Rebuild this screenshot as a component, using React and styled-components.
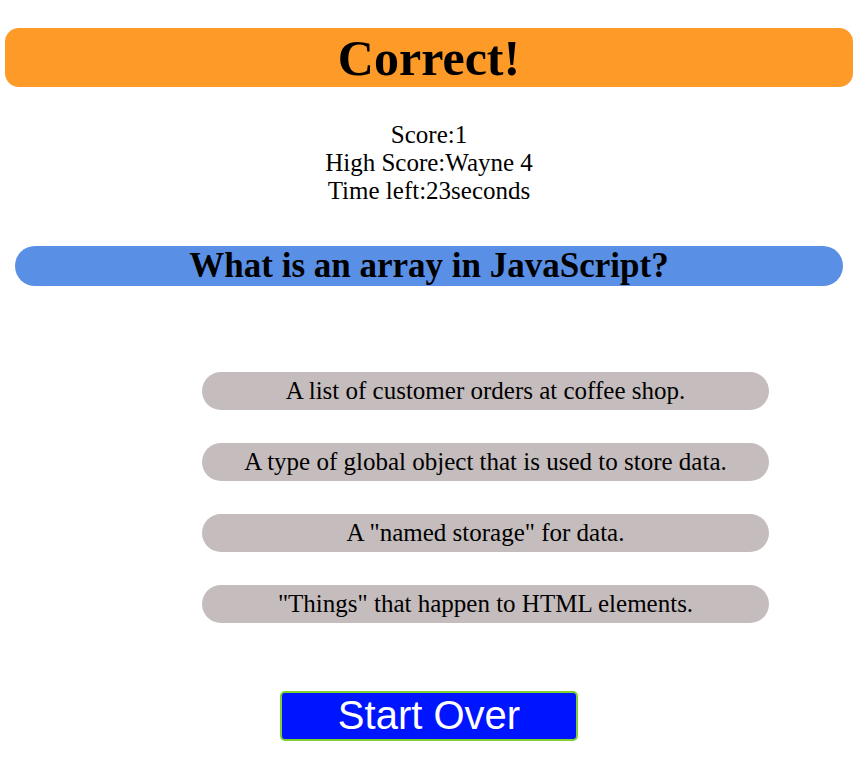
import styled, { createGlobalStyle } from 'styled-components'

const GlobalStyle = createGlobalStyle`
  body {
    margin: 0;
    background: #ffffff;
    font-family: "Liberation Serif", "Times New Roman", serif;
  }
`

const Page = styled.main`
  padding: 28px 6px 0 5px;
  display: flex;
  flex-direction: column;
`

const Banner = styled.header`
  height: 59px;
  background-color: #fe9a27;
  border-radius: 14px;
  display: flex;
  align-items: center;
  justify-content: center;
  & h1 {
    margin: 0;
    font-size: 50px;
    font-weight: bold;
    line-height: 1;
  }
`

const Stats = styled.section`
  margin-top: 34px;
  text-align: center;
  font-size: 25px;
  line-height: 28px;
`

const Question = styled.h2`
  margin: 41px 10px 0 10px;
  height: 40px;
  background-color: #5a8fe6;
  border-radius: 20px;
  display: flex;
  align-items: center;
  justify-content: center;
  font-size: 35px;
  font-weight: bold;
`

const Answers = styled.ul`
  list-style: none;
  margin: 86px 0 0 0;
  padding: 0 0 0 113px;
  display: flex;
  flex-direction: column;
  align-items: center;
  gap: 33px;
`

const Answer = styled.li`
  width: 567px;
  height: 38px;
  background-color: #c5bdbd;
  border-radius: 19px;
  display: flex;
  align-items: center;
  justify-content: center;
  font-size: 25px;
  :hover {
    cursor: pointer;
  }
`

const Footer = styled.div`
  margin-top: 68px;
  display: flex;
  justify-content: center;
`

const StartButton = styled.button`
  width: 298px;
  height: 50px;
  background-color: #0015ff;
  color: white;
  border: 2px solid #7fd12f;
  border-radius: 5px;
  font-family: "Liberation Sans", Arial, sans-serif;
  font-size: 40px;
  line-height: 1;
  padding: 0 0 2px 0;
  :hover {
    cursor: pointer;
  }
`

const answers = [
  'A list of customer orders at coffee shop.',
  'A type of global object that is used to store data.',
  'A "named storage" for data.',
  '"Things" that happen to HTML elements.',
]

export default function App() {
  return (
    <>
      <GlobalStyle />
      <Page>
        <Banner>
          <h1>Correct!</h1>
        </Banner>
        <Stats>
          <div>Score:1</div>
          <div>High Score:Wayne 4</div>
          <div>Time left:23seconds</div>
        </Stats>
        <Question>What is an array in JavaScript?</Question>
        <Answers>
          {answers.map(a => (
            <Answer key={a}>{a}</Answer>
          ))}
        </Answers>
        <Footer>
          <StartButton>Start Over</StartButton>
        </Footer>
      </Page>
    </>
  )
}
